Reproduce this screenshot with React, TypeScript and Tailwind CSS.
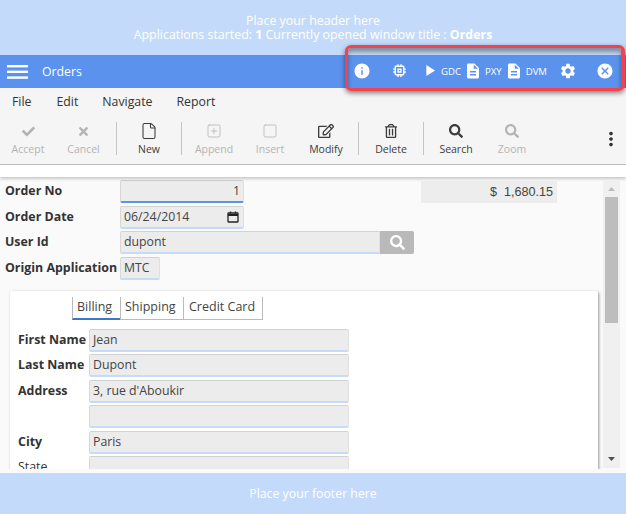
import { MdInfo, MdMemory, MdPlayArrow, MdDescription, MdSettings, MdCancel, MdMoreVert } from "react-icons/md";
import { FaCheck, FaTimes, FaSearch, FaRegEdit, FaRegTrashAlt } from "react-icons/fa";
import { File, Square, SquarePlus } from "lucide-react";
import { ReactNode } from "react";

function Tool({ icon, label, off, w }: { icon: ReactNode; label: string; off?: boolean; w: string }) {
  return (
    <div className={`flex flex-col items-center shrink-0 ${w} ${off ? "text-[#b4b4b4]" : "text-[#3c3c3c]"}`}>
      <div className="h-[20px] mt-[1px] flex items-center justify-center">{icon}</div>
      <div className="text-[10.5px] leading-[15px] mt-[1px]">{label}</div>
    </div>
  );
}
const Sep = () => <div className="w-px h-[33px] bg-[#c4c4c4] shrink-0" />;

function Input({ v, className = "", children }: { v?: string; className?: string; children?: ReactNode }) {
  return (
    <div className={`h-[23px] bg-[#ececec] rounded-[2px] border border-[#e0e0e0] border-t-[#d2d2d2] border-l-[#d8d8d8] border-b-2 border-b-[#c5dcf9] text-[12.3px] leading-[19px] text-[#444] px-[3px] flex items-start shrink-0 ${className}`}>
      {v}
      {children}
    </div>
  );
}

function Row({ label, children, h, lw, bold = true }: { label: string; children?: ReactNode; h: string; lw: string; bold?: boolean }) {
  return (
    <div className={`flex items-start ${h}`}>
      <div className={`${lw} text-[12.4px] leading-[22.6px] text-[#333] shrink-0 ${bold ? "font-bold" : "font-normal"}`}>{label}</div>
      {children}
    </div>
  );
}

export default function App() {
  return (
    <div className="relative w-[626px] h-[514px] overflow-hidden bg-[#fafafa] flex flex-col font-['Open_Sans','Noto_Sans',sans-serif]">
      <header className="h-[55px] shrink-0 bg-[#c4dafa] text-white text-[12.4px] leading-[14px] text-center pt-[14px]">
        <div>Place your header here</div>
        <div>Applications started: <b>1</b> Currently opened window title : <b>Orders</b></div>
      </header>

      <div className="h-[33px] shrink-0 bg-[#5a92ee] text-white flex items-center">
        <svg width="21" height="14" viewBox="0 0 21 14" className="ml-[7px]" fill="white">
          <rect y="0" width="21" height="2.4" />
          <rect y="5.6" width="21" height="2.4" />
          <rect y="11.4" width="21" height="2.4" />
        </svg>
        <div className="ml-[14px] mt-[1px] text-[12.3px]">Orders</div>
        <div className="ml-auto flex items-center text-[9.6px] font-medium mr-[12px] -translate-y-[1px]">
          <MdInfo size={18} />
          <MdMemory size={17} className="ml-[20px]" />
          <MdPlayArrow size={19} className="ml-[12px]" />
          <span className="ml-[2px] mt-[4px]">GDC</span>
          <MdDescription size={18} className="ml-[3px]" />
          <span className="ml-[3px] mt-[4px]">PXY</span>
          <MdDescription size={18} className="ml-[3px]" />
          <span className="ml-[3px] mt-[4px]">DVM</span>
          <MdSettings size={18} className="ml-[12px]" />
          <MdCancel size={18} className="ml-[19px]" />
        </div>
      </div>

      <nav className="h-[27px] pt-[1px] shrink-0 bg-[#f5f5f5] flex items-center text-[12.3px] text-[#333] pl-[12px]">
        <span className="mr-[25px]">File</span>
        <span className="mr-[24px]">Edit</span>
        <span className="mr-[24px]">Navigate</span>
        <span>Report</span>
      </nav>

      <div className="h-[50px] shrink-0 bg-[#f5f5f5] border-b border-[#bdbdbd] flex items-center pl-[5px] pb-[2px]">
        <Tool w="w-[46px]" off icon={<FaCheck size={13} />} label="Accept" />
        <Tool w="w-[65px]" off icon={<FaTimes size={13} />} label="Cancel" />
        <Sep />
        <Tool w="w-[64px]" icon={<File size={18} strokeWidth={1.4} />} label="New" />
        <Sep />
        <div className="w-[4px] shrink-0" />
        <Tool w="w-[56px]" off icon={<SquarePlus size={16} strokeWidth={1.2} />} label="Append" />
        <Tool w="w-[56px]" off icon={<Square size={16} strokeWidth={1.2} />} label="Insert" />
        <Tool w="w-[56px]" icon={<FaRegEdit size={16} />} label="Modify" />
        <div className="w-[4px] shrink-0" />
        <Sep />
        <Tool w="w-[64px]" icon={<FaRegTrashAlt size={14} />} label="Delete" />
        <Sep />
        <Tool w="w-[64px]" icon={<FaSearch size={14} />} label="Search" />
        <Tool w="w-[48px]" off icon={<FaSearch size={14} />} label="Zoom" />
        <MdMoreVert size={22} className="ml-[64px] text-[#333] mt-[1px]" />
      </div>

      <div className="h-[12px] shrink-0 bg-white shadow-[0_2px_3px_rgba(0,0,0,0.2)] z-10" />

      <main className="h-[292px] shrink-0 bg-[#fafafa] flex overflow-hidden">
        <div className="flex-1 min-w-0 overflow-hidden pl-[5px] pt-[3px]">
          <Row label="Order No" lw="w-[115px]" h="h-[26px]">
            <Input v="1" className="w-[124px] justify-end !border-b-[#5a92ee]" />
            <div className="ml-[177px] mt-[1px] w-[136px] h-[22px] bg-[#ededed] text-[12.6px] leading-[22px] text-right pr-[4px] text-[#444] font-['Liberation_Sans']">$&nbsp;&nbsp;1,680.15</div>
          </Row>
          <Row label="Order Date" lw="w-[115px]" h="h-[25px]">
            <Input v="06/24/2014" className="w-[124px] justify-between">
              <svg width="12" height="12" viewBox="0 0 12 12" className="mt-[4px] mr-[1px]" fill="none" stroke="#222" strokeWidth="1.3">
                <rect x="1" y="2" width="10" height="9" rx="0.5" />
                <path d="M1 4h10" strokeWidth="2" />
                <path d="M3.5 0.5v2M8.5 0.5v2" />
              </svg>
            </Input>
          </Row>
          <Row label="User Id" lw="w-[115px]" h="h-[26px]">
            <Input v="dupont" className="w-[260px] rounded-r-none" />
            <div className="w-[34px] h-[23px] bg-[#b9b9b9] rounded-r-[2px] flex items-center justify-center text-white"><FaSearch size={15} /></div>
          </Row>
          <Row label="Origin Application" lw="w-[115px]" h="h-[27px]">
            <Input v="MTC" className="w-[40px]" />
          </Row>
          <div className="mt-[7px] ml-[5px] w-[588px] h-[300px] bg-white rounded-[2px] shadow-[1px_1px_3px_rgba(0,0,0,0.4)] pl-[8px] pt-[6px]">
            <div className="ml-[54px] flex h-[23px] text-[12.5px] text-[#444] leading-[20px]">
              <div className="w-[48px] pl-[4px] border-l border-[#bbb] border-b-2 border-b-[#3f76c9]">Billing</div>
              <div className="w-[63px] pl-[4px] border-l border-[#bbb] border-b border-b-[#bbb]">Shipping</div>
              <div className="w-[80px] pl-[5px] border-x border-[#bbb] border-b border-b-[#bbb]">Credit Card</div>
            </div>
            <div className="mt-[9px]">
              <Row label="First Name" lw="w-[71px]" h="h-[25px]"><Input v="Jean" className="w-[260px]" /></Row>
              <Row label="Last Name" lw="w-[71px]" h="h-[26px]"><Input v="Dupont" className="w-[260px]" /></Row>
              <Row label="Address" lw="w-[71px]" h="h-[25px]"><Input v="3, rue d'Aboukir" className="w-[260px]" /></Row>
              <Row label="" lw="w-[71px]" h="h-[26px]"><Input className="w-[260px]" /></Row>
              <Row label="City" lw="w-[71px]" h="h-[25px]"><Input v="Paris" className="w-[260px]" /></Row>
              <Row label="State" lw="w-[71px]" h="h-[25px]" bold={false}><Input className="w-[260px]" /></Row>
            </div>
          </div>
        </div>
        <div className="w-[17px] mr-[6px] mt-[4px] mb-[1px] shrink-0 bg-[#f0f0f0] flex flex-col items-center">
          <svg width="7" height="4" viewBox="0 0 7 4" className="mt-[6px]"><path d="M3.5 0L7 4H0z" fill="#bbb" /></svg>
          <div className="w-[13px] h-[126px] mt-[6px] bg-[#bdbdbd]" />
          <svg width="7" height="4" viewBox="0 0 7 4" className="mt-auto mb-[7px]"><path d="M0 0h7L3.5 4z" fill="#505050" /></svg>
        </div>
      </main>

      <footer className="h-[41px] mt-[4px] pt-[1px] shrink-0 bg-[#c4dafa] text-white text-[12.3px] flex items-center justify-center">Place your footer here</footer>

      <div className="absolute left-[345px] top-[45px] w-[280px] h-[46px] border-[3px] border-r-[4px] border-[#f0434f] rounded-[6px] shadow-[0_2px_5px_rgba(0,0,0,0.5),inset_0_4px_4px_rgba(0,0,0,0.35)] pointer-events-none" />
    </div>
  );
}
